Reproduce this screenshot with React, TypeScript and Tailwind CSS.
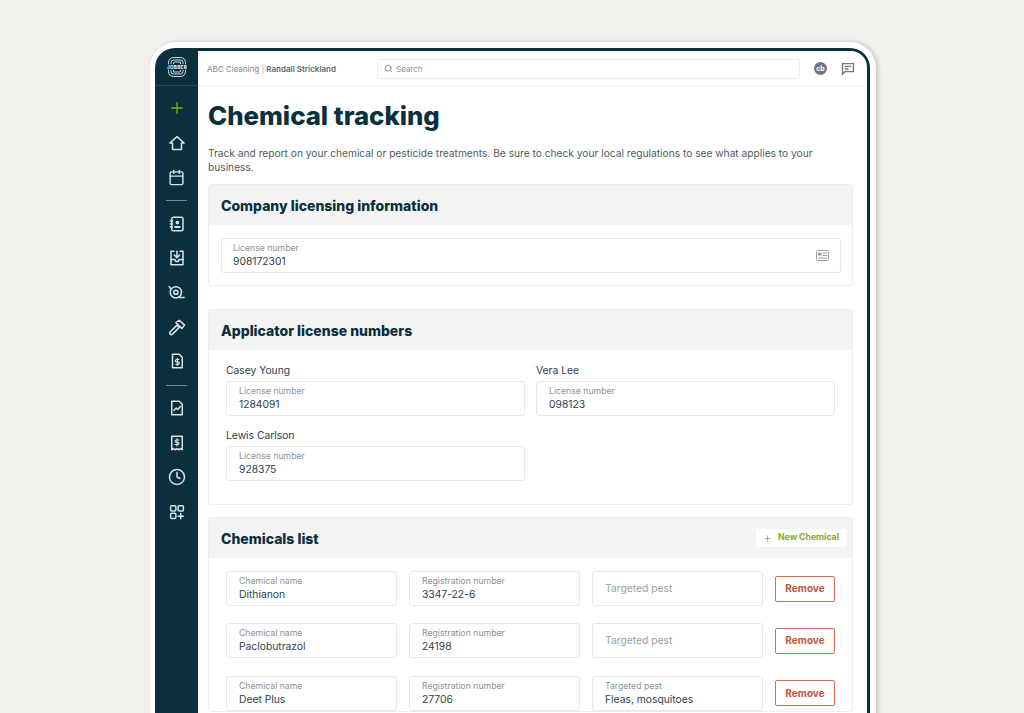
import { Plus, Calendar, Search, Clock } from "lucide-react";
import type { ReactNode } from "react";

const heading = "font-['Inter',sans-serif] font-extrabold text-[#0a2f3d]";

function NavIcon({ children }: { children: ReactNode }) {
  return (
    <svg width="18" height="18" viewBox="0 0 24 24" fill="none" stroke="#d9e3e6" strokeWidth="2" strokeLinecap="round" strokeLinejoin="round">
      {children}
    </svg>
  );
}

function Field({ label, value, className = "" }: { label?: string; value: string; className?: string }) {
  return (
    <div className={`h-[35px] border border-[#e6e7e6] rounded-[3px] bg-white flex flex-col justify-center px-3 ${className}`}>
      {label && <div className="text-[8.7px] leading-[12px] text-[#8a9296]">{label}</div>}
      <div className={label ? "text-[10.3px] leading-[15px] text-[#2c434d]" : "text-[10.3px] leading-[15px] text-[#9a9fa1]"}>{value}</div>
    </div>
  );
}

function Card({ title, action, className = "", children }: { title: string; action?: ReactNode; className?: string; children: ReactNode }) {
  return (
    <section className={`border border-[#ededed] rounded-[3px] ${className}`}>
      <div className="h-[40px] bg-[#f4f4f4] flex items-center justify-between pl-[12px] pr-[6px]">
        <h2 className={`${heading} text-[14px] pt-[1px]`}>{title}</h2>
        {action}
      </div>
      {children}
    </section>
  );
}

function ChemicalRow({ name, reg, pest }: { name: string; reg: string; pest?: string }) {
  return (
    <div className="flex items-center gap-3 h-[35px]">
      <Field label="Chemical name" value={name} className="w-[171px]" />
      <Field label="Registration number" value={reg} className="w-[171px]" />
      {pest ? <Field label="Targeted pest" value={pest} className="w-[171px]" /> : <Field value="Targeted pest" className="w-[171px]" />}
      <button className="w-[60px] h-[26px] border border-[#cf6f58] rounded-[2px] text-[10px] font-bold text-[#c4553e]">Remove</button>
    </div>
  );
}

export default function App() {
  return (
    <div className="h-[713px] overflow-hidden bg-[#f1f0ed] pt-[42px] pl-[150px] font-['Inter',sans-serif]">
      <div className="w-[726px] h-[720px] bg-white rounded-t-[26px] pt-[6px] pl-[5px] pr-[6px] shadow-[2px_0_4px_rgba(0,0,0,0.18)]">
        <div className="h-full bg-[#0a2f3d] rounded-t-[20px] flex pt-[3px] pr-[3px]">
          {/* Sidebar */}
          <aside className="w-[43px] shrink-0 -mt-[3px] flex flex-col items-center">
            <div className="h-[38px] w-full flex items-center justify-center border-b border-[#2a4a57]">
              {/* Jobber mark: rounded square of line work with the word band across it */}
              <svg width="22" height="22" viewBox="0 0 22 22" fill="none" stroke="#e8eef0" strokeWidth="0.9">
                <rect x="2.500" y="1.500" width="17" height="19" rx="5" />
                <path d="M5 8.500V6.500a2.500 2.500 0 0 1 2.500-2.500h7a2.500 2.500 0 0 1 2.500 2.500v2" />
                <path d="M7.500 8.500V7a1 1 0 0 1 1-1h6v2.500" />
                <path d="M5 13.500v2a2.500 2.500 0 0 0 2.500 2.500h7a2.500 2.500 0 0 0 2.500-2.500v-2" />
                <path d="M7.500 13.500V16h6a1 1 0 0 0 1-1v-1.500" />
                <rect x="0" y="8.300" width="22" height="5.400" fill="#0a2f3d" stroke="none" />
                <text x="11" y="12.600" textAnchor="middle" fontSize="4.600" fontWeight="800" letterSpacing="0.300" fill="#e8eef0" stroke="none" fontFamily="Inter, sans-serif">JOBBER</text>
              </svg>
            </div>
            <div className="mt-[13px] flex flex-col items-center">
              <Plus size={18} color="#7db00e" strokeWidth={1.8} />
              <div className="mt-[17px]">
                <NavIcon>
                  <path d="M12 3.500 2.500 12H6v8.500h12V12h3.500z" />
                </NavIcon>
              </div>
              <Calendar size={17} color="#d9e3e6" strokeWidth={2} className="mt-[17px]" />
              <div className="w-[21px] h-px bg-[#6c858f] mt-[14px] mb-[14px]" />
              <div className="flex flex-col gap-[16.250px]">
                <NavIcon>
                  <rect x="5" y="3" width="15" height="18" rx="2" />
                  <path d="M3 8h3M3 12h3M3 16h3" />
                  <circle cx="12.500" cy="10" r="1.500" fill="#d9e3e6" />
                  <path d="M9.500 16h6" strokeWidth="2.500" />
                </NavIcon>
                <NavIcon>
                  <path d="M8 3H4v18h16V3h-4" />
                  <path d="M4 14h5l1.500 2.500h3L15 14h5" />
                  <path d="M12 3v8M8.500 8l3.500 3.500L15.500 8" />
                </NavIcon>
                <NavIcon>
                  <circle cx="10.500" cy="11" r="7.500" />
                  <circle cx="10.500" cy="11" r="2.800" />
                  <path d="M3.500 6 1.500 3.500M15 18h6.500" />
                </NavIcon>
                <NavIcon>
                  <path d="M3 18.500 12 9.500l3 3-9 9a2 2 0 0 1-3-3z" />
                  <path d="M10.500 6 15 3l7 6.500-3.500 4.500z" />
                </NavIcon>
                <NavIcon>
                  <path d="M6 3h9l4 4v14H6z" />
                  <path d="M14.500 10h-3a1.500 1.500 0 0 0 0 3.200h2a1.500 1.500 0 0 1 0 3.200h-3M12.500 8.500v9.500" strokeWidth="1.600" />
                </NavIcon>
              </div>
              <div className="w-[21px] h-px bg-[#6c858f] mt-[15px] mb-[13px]" />
              <div className="flex flex-col gap-[16.500px]">
                <NavIcon>
                  <path d="M5 3h10l4 4v14H5z" />
                  <path d="M8 15l3-3 2 2 3.500-4" />
                </NavIcon>
                <NavIcon>
                  <path d="M5 3h14v18l-2.300-1.500L14.300 21 12 19.500 9.700 21l-2.400-1.500L5 21z" />
                  <path d="M14.500 8h-3.500a1.500 1.500 0 0 0 0 3h2a1.500 1.500 0 0 1 0 3H9.500M12 6.500V16" strokeWidth="1.600" />
                </NavIcon>
                <Clock size={18} color="#d9e3e6" strokeWidth={2} />
                <NavIcon>
                  <rect x="3.500" y="3.500" width="7" height="7" rx="1.500" />
                  <rect x="13.500" y="3.500" width="7" height="7" rx="1.500" />
                  <rect x="3.500" y="13.500" width="7" height="7" rx="1.500" />
                  <path d="M17 14v7M13.500 17.500h7" />
                </NavIcon>
              </div>
            </div>
          </aside>

          {/* Main */}
          <main className="flex-1 bg-white rounded-tr-[16px]">
            <header className="h-[35px] border-b border-[#efefef] flex items-center pl-[9px] pr-[8px] pt-[1px]">
              <div className="w-[170px] text-[8px] text-[#7d878b] whitespace-nowrap">
                ABC Cleaning <span className="text-[#9aa1a4]">|</span> <span className="font-semibold text-[#5c686d]">Randall Strickland</span>
              </div>
              <div className="w-[423px] h-[20px] border border-[#ececec] rounded-[2px] flex items-center gap-[3px] pl-[6px]">
                <Search size={9} color="#6d777b" />
                <span className="text-[8px] text-[#8a9296]">Search</span>
              </div>
              {/* avatar and chat glyphs are grey and blocky in the picture */}
              <div className="ml-[14px] w-[13px] h-[13px] rounded-full bg-[#6e777b] flex items-center justify-center text-[7px] font-bold text-white leading-none">cb</div>
              <svg width="14" height="14" viewBox="0 0 14 14" fill="none" stroke="#6e777b" strokeWidth="1.300" className="ml-[14px]">
                <path d="M1.500 1.700h11v8h-8.500l-2.500 2.500z" />
                <path d="M3.800 4.300h6.400M3.800 7h3.800" />
              </svg>
            </header>

            <div className="pl-[10px] pr-[14px]">
              <h1 className={`${heading} text-[25.750px] leading-[34px] mt-[13px]`}>Chemical tracking</h1>
              <p className="mt-[14px] pr-[30px] text-[10.200px] leading-[13.500px] text-[#4c5b61]">
                Track and report on your chemical or pesticide treatments. Be sure to check your local regulations to see what applies to your business.
              </p>

              <Card title="Company licensing information" className="mt-[10px] h-[102px]">
                <div className="pt-[13px] pl-[12px] pr-[12px]">
                  <div className="relative -mr-[1px]">
                    <Field label="License number" value="908172301" className="pl-[11px]" />
                    <svg width="13" height="11" viewBox="0 0 13 11" className="absolute right-[12px] top-[12px]" fill="none" stroke="#9a9fa1">
                      <rect x="0.500" y="0.500" width="12" height="10" rx="1" />
                      <rect x="2" y="2.500" width="3.500" height="3" fill="#9a9fa1" stroke="none" />
                      <path d="M7 3h4M7 5.500h4M2 8h9" />
                    </svg>
                  </div>
                </div>
              </Card>

              <Card title="Applicator license numbers" className="mt-[23px] h-[196px]">
                <div className="pt-[13px] px-[17px] grid grid-cols-[299px_299px] gap-x-[11px] gap-y-[12px]">
                  <div>
                    <div className="text-[10.300px] leading-[15px] text-[#2c434d] mb-[3px]">Casey Young</div>
                    <Field label="License number" value="1284091" />
                  </div>
                  <div>
                    <div className="text-[10.300px] leading-[15px] text-[#2c434d] mb-[3px]">Vera Lee</div>
                    <Field label="License number" value="098123" />
                  </div>
                  <div>
                    <div className="text-[10.300px] leading-[15px] text-[#2c434d] mb-[3px]">Lewis Carlson</div>
                    <Field label="License number" value="928375" />
                  </div>
                </div>
              </Card>

              <Card
                title="Chemicals list"
                className="mt-[12px]"
                action={
                  <button className="h-[18px] px-[7px] bg-white rounded-[2px] flex items-center gap-[6px] text-[8.700px] font-bold text-[#86a92c]">
                    <Plus size={9} color="#86a92c" />
                    New Chemical
                  </button>
                }
              >
                <div className="pt-[13px] pl-[17px] flex flex-col gap-[17.400px]">
                  <ChemicalRow name="Dithianon" reg="3347-22-6" />
                  <ChemicalRow name="Paclobutrazol" reg="24198" />
                  <ChemicalRow name="Deet Plus" reg="27706" pest="Fleas, mosquitoes" />
                </div>
              </Card>
            </div>
          </main>
        </div>
      </div>
    </div>
  );
}
